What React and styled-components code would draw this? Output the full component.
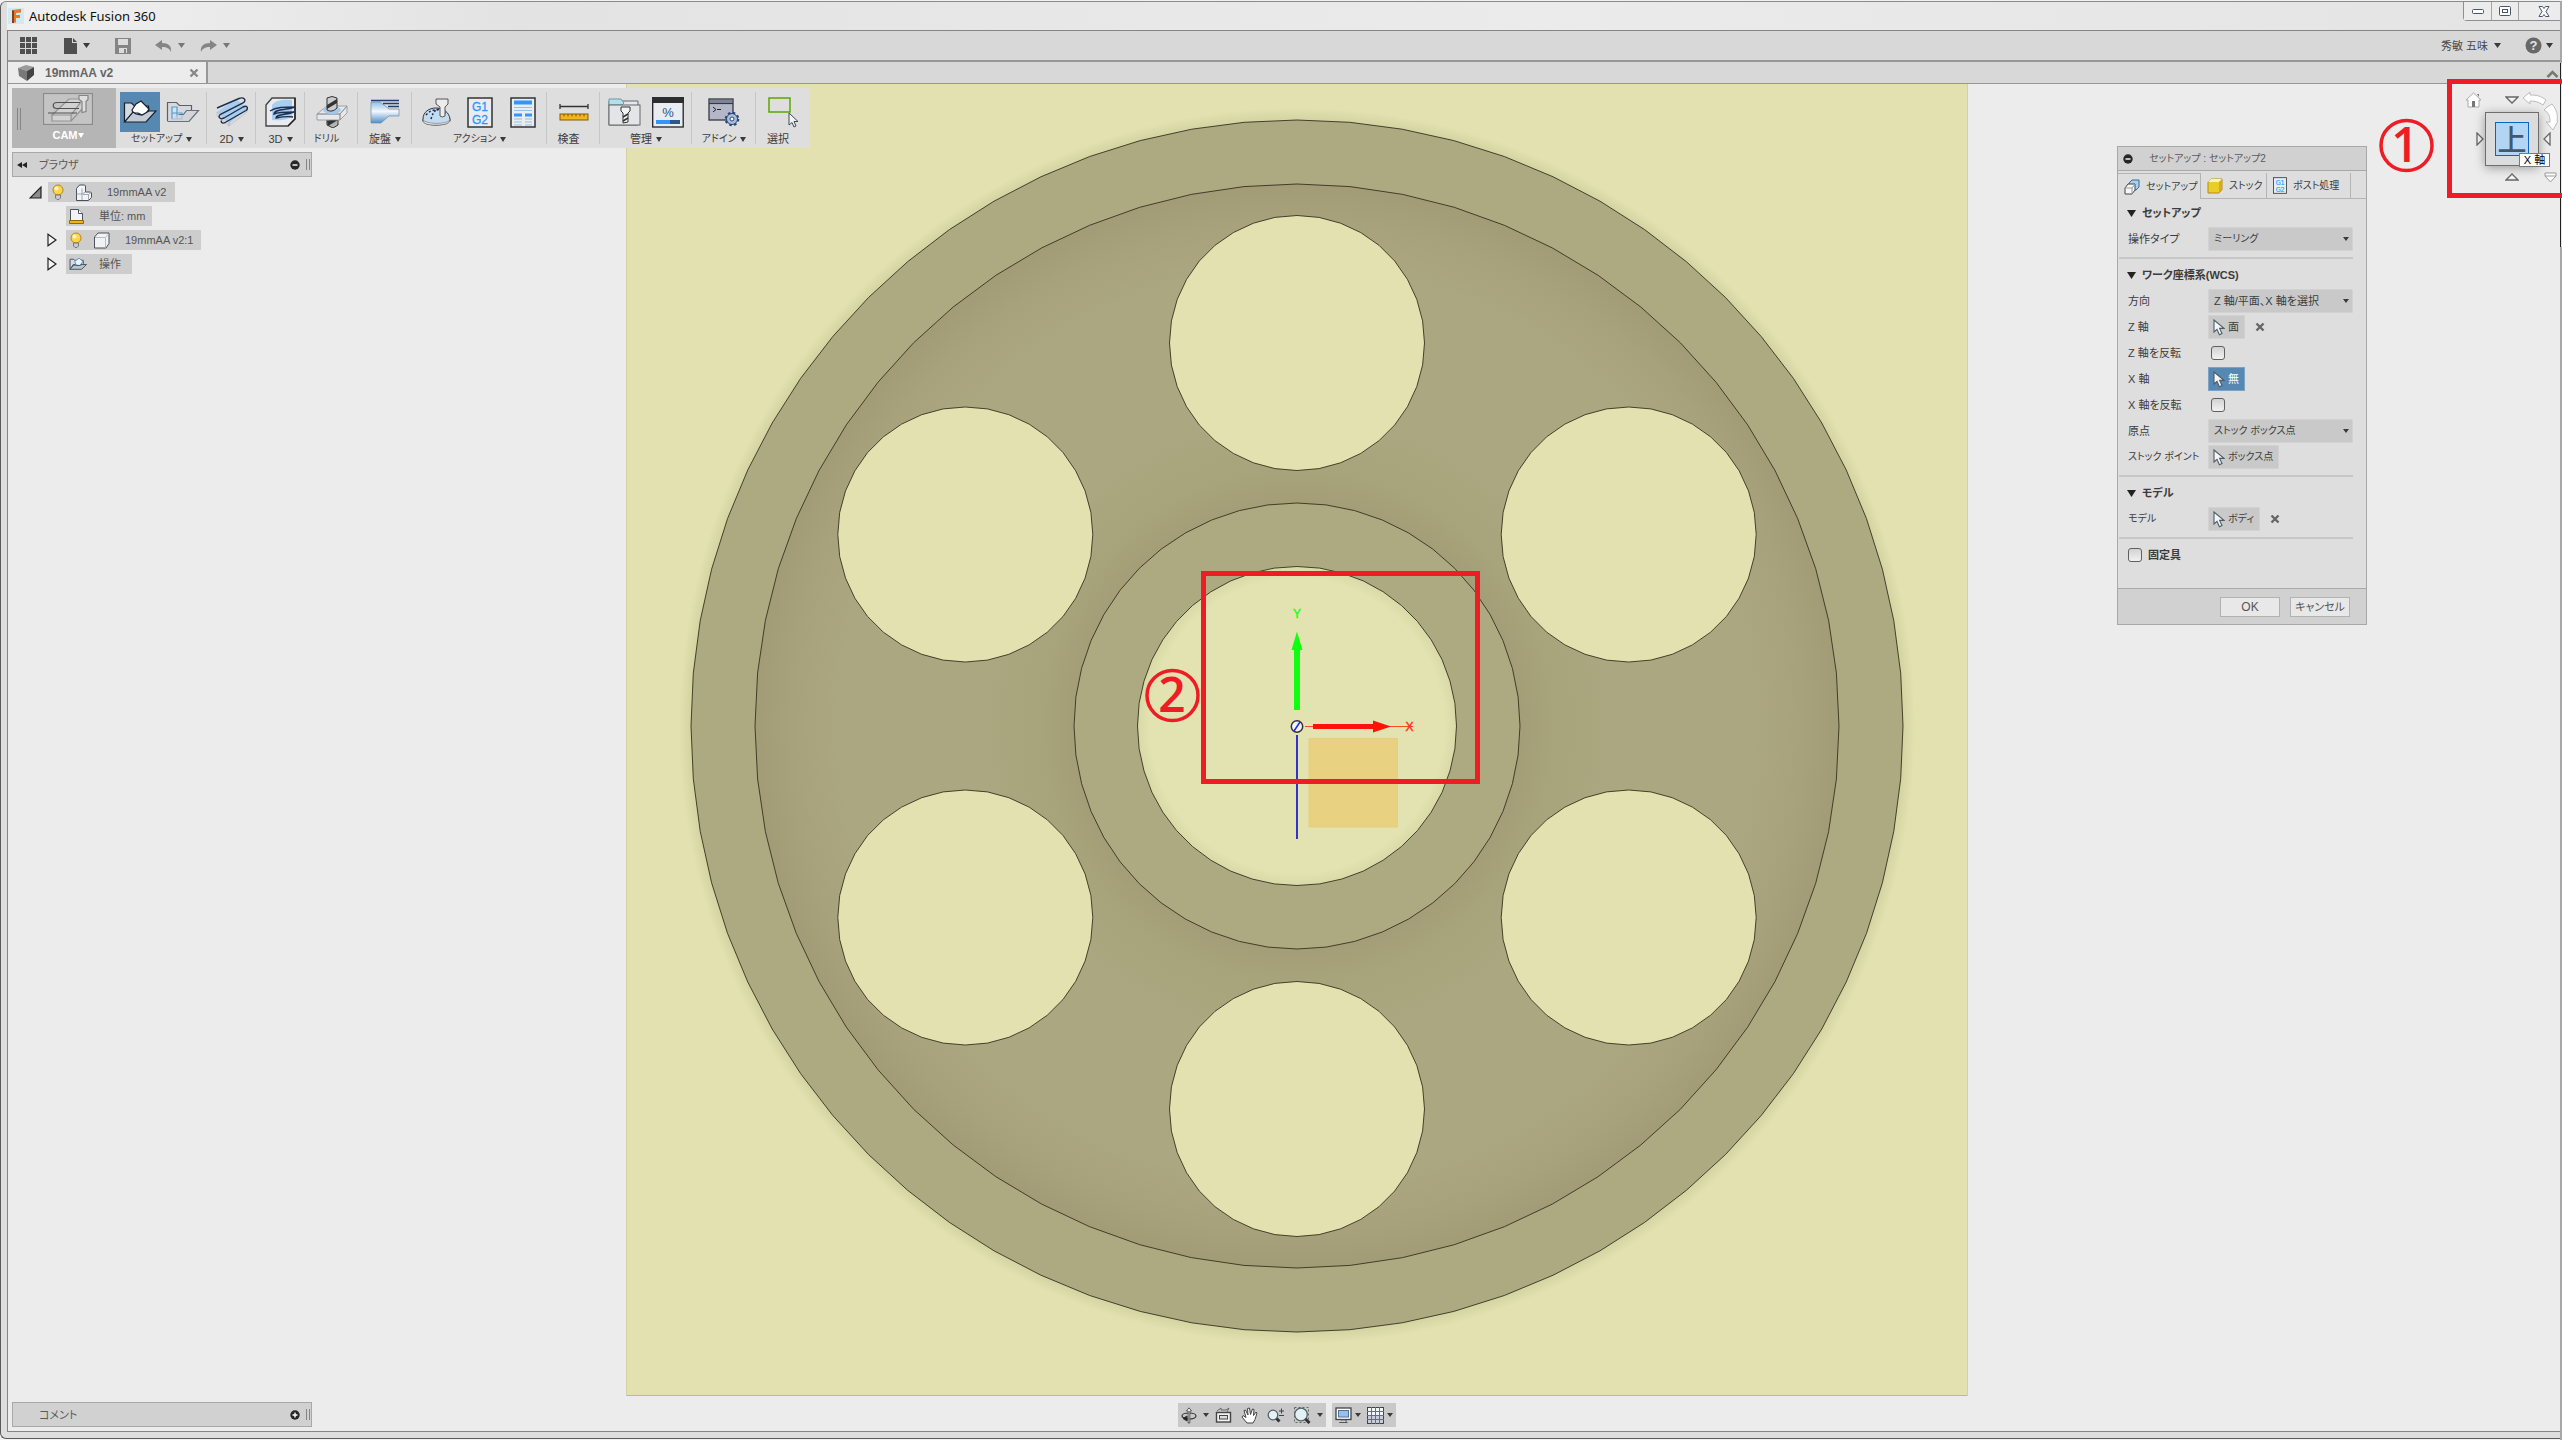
import React from 'react';
import styled, { createGlobalStyle } from 'styled-components';

const GlobalStyle = createGlobalStyle`
  * { box-sizing: border-box; }
  html, body, #root { height: 100%; }
  body {
    margin: 0;
    background: #f2f2f2;
    color: #3c3c3c;
    font: 11px/14px "Liberation Sans", "Noto Sans CJK JP", sans-serif;
    font-feature-settings: "palt";
    overflow: hidden;
  }
  button, select, input { font: inherit; color: inherit; font-feature-settings: inherit; }
  svg { display: block; flex: none; }
`;

// Katakana captions are set one size below kanji and Latin ones.
const size = (text) => (/^[\u30a0-\u30ff\s]+点?$/.test(text) ? 10 : 11);

/* ---------- window frame ---------- */

const Window = styled.div`
  position: relative;
  display: flex;
  height: 100vh;
  padding-top: 1px;
`;
const Frame = styled.div`
  flex: 1;
  min-width: 0;
  display: flex;
  flex-direction: column;
  margin-bottom: 1px;
  padding: 0 0 6px 6px;
  border: 1px solid #5c5a5b;
  border-right: 0;
  border-top-color: #8a8a8a;
  border-radius: 6px 0 0 6px;
  background: #dfdede;
`;
const EdgeStrip = styled.div`
  width: 2px;
  background:
    linear-gradient(#222, #222) 0 62px / 1px 184px no-repeat,
    linear-gradient(#e6e6e6, #e6e6e6) 1px 62px / 1px 184px no-repeat,
    #a8a8a8;
`;
const TitleBar = styled.header`
  display: flex;
  align-items: flex-start;
  height: 28px;
  padding-left: 1px;
  background: linear-gradient(90deg, #f0f0f0, #e3e3e3 20%, #ebebeb 60%, #e4e4e4);
  color: #111;
`;
const Title = styled.h1`
  flex: 1;
  margin: 5px 0 0 5px;
  font: 13px/18px "Noto Sans", sans-serif;
`;
const LogoSlot = styled.div`
  padding-top: 6px;
`;
const WindowButtons = styled.div`
  display: flex;
  border: 1px solid #8f8f8f;
  border-top: 0;
  border-right: 0;
  border-radius: 0 0 0 4px;
`;
const WindowButton = styled.button`
  display: flex;
  align-items: center;
  justify-content: center;
  width: ${(p) => p.$width}px;
  height: 18px;
  padding: 0 0 0 ${(p) => p.$inset || 0}px;
  border: 0;
  border-left: ${(p) => (p.$first ? 0 : 1)}px solid #a5a5a5;
  background: #ececec;
`;
const Client = styled.div`
  flex: 1;
  min-height: 0;
  display: flex;
  flex-direction: column;
  border: 1px solid #858585;
  border-right: 0;
  background: #ececec;
`;

/* ---------- top bars ---------- */

const AppBar = styled.nav`
  display: flex;
  align-items: center;
  height: 31px;
  padding: 0 7px 0 12px;
  border-bottom: 2px solid #979797;
  background: #d8d8d8;
`;
const IconButton = styled.button`
  display: flex;
  align-items: center;
  justify-content: flex-start;
  gap: ${(p) => p.$gap || 6}px;
  width: ${(p) => (p.$width ? p.$width + 'px' : 'auto')};
  height: 24px;
  padding: 0;
  border: 0;
  background: none;
  color: ${(p) => (p.$muted ? '#8a8a8a' : '#484848')};
`;
const Grow = styled.div`
  flex: 1;
`;
const UserButton = styled(IconButton)`
  margin-right: 24px;
`;
const TabStrip = styled.div`
  display: flex;
  height: 22px;
  border-bottom: 1px solid #979797;
  background: #d8d8d8;
`;
const DocumentTab = styled.div`
  display: flex;
  align-items: center;
  width: 200px;
  padding: 0 7px 0 10px;
  border-right: 2px solid #979797;
  background: #ececec;
  color: #666;
  font-size: 12px;
  font-weight: bold;
`;
const TabName = styled.span`
  flex: 1;
  margin-left: 10px;
`;

/* ---------- viewport ---------- */

const Viewport = styled.main`
  flex: 1;
  min-height: 0;
  display: grid;
  grid-template: minmax(0, 1fr) / minmax(0, 1fr);
  > * { grid-area: 1 / 1; }
`;
const Canvas = styled.svg`
  width: 100%;
  height: 100%;
`;
const LeftColumn = styled.div`
  z-index: 1;
  justify-self: start;
  display: flex;
  flex-direction: column;
  align-items: flex-start;
  padding: 4px;
`;
const Ribbon = styled.div`
  display: flex;
  height: 60px;
  margin-bottom: 4px;
  background: #dedede;
`;
const Workspace = styled.button`
  display: grid;
  grid-template-columns: 4px 1fr;
  grid-template-rows: 32px 1fr;
  place-items: center;
  width: 104px;
  padding: 5px 1px 3px 5px;
  border: 0;
  background: #b5b5b5;
  color: #fff;
  font-weight: bold;
  > :first-child { grid-row: 1 / 3; }
`;
const Grip = styled.span`
  display: block;
  width: 4px;
  height: ${(p) => p.$height}px;
  border: solid #858585;
  border-width: 0 1px;
`;
const Group = styled.div`
  display: flex;
  flex-direction: column;
  align-items: center;
  width: ${(p) => p.$width}px;
  padding-top: 4px;
  background: linear-gradient(#c6c6c6, #c6c6c6) right center / 1px 52px no-repeat;
  &:last-child { background: none; }
`;
const ToolRow = styled.div`
  display: flex;
  gap: 3px;
`;
const Tool = styled.button`
  display: flex;
  align-items: center;
  justify-content: center;
  width: 40px;
  height: 40px;
  padding: 0;
  border: 0;
  background: ${(p) => (p.$active ? '#5788b2' : 'none')};
`;
const Caption = styled.div`
  display: flex;
  align-items: center;
  justify-content: center;
  gap: ${(p) => p.$gap ?? 4}px;
  font-size: ${(p) => p.$size || 11}px;
  white-space: nowrap;
`;

const PanelBar = styled.div`
  display: flex;
  align-items: center;
  width: 300px;
  height: 25px;
  padding: 0 1px 0 4px;
  border: 1px solid #a8a8a8;
  background: #d1d1d1;
`;
const PanelTitle = styled.h2`
  flex: 1;
  margin: 0 0 0 ${(p) => p.$indent}px;
  color: #5a5a5a;
  font: inherit;
`;
const BareButton = styled.button`
  display: flex;
  justify-self: ${(p) => p.$side || 'auto'};
  padding: 0;
  border: 0;
  background: none;
`;
const GripSlot = styled.span`
  margin-left: 6px;
`;
const Tree = styled.ul`
  flex: 1;
  margin: 5px 0 0;
  padding: 0;
  list-style: none;
`;
const TreeRow = styled.li`
  display: flex;
  align-items: center;
  height: 20px;
  margin-bottom: 4px;
  padding-left: ${(p) => p.$indent}px;
`;
const ArrowSlot = styled.span`
  width: 19px;
`;
const TreeItem = styled.span`
  display: flex;
  align-items: center;
  gap: 10px;
  width: ${(p) => p.$width}px;
  height: 20px;
  padding-left: 3px;
  background: #cdcdcd;
  color: #555;
`;
const TreeText = styled.span`
  margin-left: ${(p) => p.$space}px;
`;

const NavBars = styled.div`
  z-index: 1;
  align-self: end;
  justify-self: center;
  display: flex;
  gap: 6px;
  padding: 0 0 4px 6px;
`;
const NavBar = styled.div`
  display: flex;
  align-items: center;
  gap: 6px;
  height: 24px;
  padding: 0 3px;
  background: #c9c9c9;
`;

/* ---------- view cube ---------- */

const CubeGrid = styled.div`
  z-index: 1;
  position: relative;
  align-self: start;
  justify-self: end;
  display: grid;
  grid-template: 22px 54px 20px / 22px 54px 20px;
  gap: 1px;
  place-items: center;
  padding-top: 5px;
`;
const RollArrows = styled.svg`
  margin: 12px 12px -12px -8px;
`;
const CubeFace = styled.button`
  display: grid;
  place-items: center;
  width: 54px;
  height: 54px;
  padding: 0;
  border: 1px solid #6e6e6e;
  background: #dcdcdc;
  box-shadow: 0 2px 10px rgba(0, 0, 0, 0.35);
`;
const CubeLabel = styled.span`
  width: 34px;
  height: 34px;
  border: 1px solid #0a64c4;
  background: #b1d5f3;
  color: #43586e;
  font: 500 29px/30px "Noto Sans CJK JP", sans-serif;
`;
const Tip = styled.span`
  position: absolute;
  left: 57px;
  top: 69px;
  width: 31px;
  border: 1px solid #767a86;
  background: #fff;
  color: #000;
  line-height: 12px;
  text-align: center;
  white-space: nowrap;
`;

/* ---------- set-up dialog ---------- */

const Dialog = styled.form`
  z-index: 1;
  align-self: start;
  justify-self: end;
  width: 250px;
  margin: 62px 193px 0 0;
  border: 1px solid #a8a8a8;
  background: #dedede;
`;
const DialogHead = styled.div`
  display: flex;
  align-items: center;
  gap: 16px;
  height: 24px;
  padding-left: 5px;
  border-bottom: 1px solid #a8a8a8;
  background: #d1d1d1;
  color: #5a5a5a;
  font-size: 10px;
`;
const Tabs = styled.div`
  display: flex;
  height: 28px;
  padding-top: 2px;
  background: linear-gradient(#b4b4b4, #b4b4b4) bottom / 100% 1px no-repeat;
`;
const Tab = styled.button`
  display: flex;
  align-items: center;
  gap: 6px;
  width: ${(p) => p.$width}px;
  padding: 0 0 0 6px;
  border: solid #b4b4b4;
  border-width: ${(p) => (p.$active ? '1px 1px 0 0' : '0 1px 1px 0')};
  background: #dedede;
  font-size: 10px;
  white-space: nowrap;
`;
const Body = styled.div`
  padding: 1px 13px 20px 1px;
`;
const SectionHead = styled.button`
  display: flex;
  align-items: center;
  gap: 6px;
  height: 26px;
  padding: 0 0 0 8px;
  border: 0;
  background: none;
  font-weight: bold;
`;
const Rule = styled.hr`
  height: 2px;
  margin: 5px 0 3px;
  border: 0;
  background: #c7c7c7;
`;
const Field = styled.div`
  display: grid;
  grid-template-columns: 80px 1fr;
  align-items: center;
  height: 26px;
  padding-left: 9px;
`;
const Label = styled.label`
  font-size: ${(p) => p.$size}px;
  white-space: nowrap;
`;
const Controls = styled.div`
  display: flex;
  align-items: center;
  gap: 10px;
`;
const SelectBox = styled.div`
  display: grid;
  align-items: center;
  > * { grid-area: 1 / 1; }
  svg { justify-self: end; margin-right: 4px; pointer-events: none; }
`;
const Select = styled.select`
  width: 100%;
  height: 24px;
  padding: 0 0 0 5px;
  border: 1px solid #d2d2d2;
  border-radius: 1px;
  background: #c9c9c9;
  font-size: ${(p) => p.$size}px;
  appearance: none;
`;
const Pick = styled.button`
  display: flex;
  align-items: center;
  gap: 3px;
  min-width: 37px;
  height: 24px;
  padding: 0 5px 0 4px;
  border: 1px solid ${(p) => (p.$active ? '#7aa3c6' : '#d2d2d2')};
  background: ${(p) => (p.$active ? '#5788b2' : '#c9c9c9')};
  color: ${(p) => (p.$active ? '#fff' : 'inherit')};
  font-size: ${(p) => p.$size}px;
`;
const Check = styled.input`
  width: 14px;
  height: 14px;
  margin: 0 0 0 ${(p) => p.$indent || 0}px;
  border: 1px solid #606060;
  border-radius: 3px;
  background: linear-gradient(#d2d2d2, #f2f2f2);
  appearance: none;
`;
const CheckLine = styled.label`
  display: flex;
  align-items: center;
  gap: 6px;
  height: 26px;
  padding-left: 9px;
  font-weight: bold;
`;
const DialogFoot = styled.div`
  display: flex;
  align-items: center;
  justify-content: flex-end;
  gap: 10px;
  height: 36px;
  padding-right: 16px;
  border-top: 1px solid #a8a8a8;
  background: #d1d1d1;
`;
const FootButton = styled.button`
  width: 60px;
  height: 20px;
  padding: 0;
  border: 1px solid #b2b2b2;
  background: #e8e8e8;
  color: #555;
  font-size: ${(p) => p.$size || 11}px;
  white-space: nowrap;
`;

const Notes = styled.svg`
  position: absolute;
  inset: 0;
  width: 100%;
  height: 100%;
  z-index: 2;
  pointer-events: none;
`;

/* ---------- icons ---------- */

const CaretShape = styled.svg`
  visibility: ${(p) => (p.$hidden ? 'hidden' : 'visible')};
`;
const Caret = ({ w = 7, h = 5, color = '#3a3a3a', hidden }) => (
  <CaretShape width={w} height={h} $hidden={hidden}><path d={`M0 0H${w}L${w / 2} ${h}Z`} fill={color} /></CaretShape>
);
const Cross = ({ color = '#666' }) => (
  <svg width="10" height="10"><path d="M1.5 1.5l7 7M8.5 1.5l-7 7" stroke={color} strokeWidth="2.4" /></svg>
);
const Dot = ({ plus }) => (
  <svg width="10" height="10">
    <circle cx="5" cy="5" r="4.7" fill="#262626" />
    <path d={plus ? 'M2.5 5h5M5 2.5v5' : 'M2.5 5h5'} stroke="#fff" strokeWidth="1.4" />
  </svg>
);
const Pointer = ({ w = 12, h = 17 }) => (
  <svg width={w} height={h} viewBox="0 0 12 17">
    <path d="M1 1v12l3-2.6 2.4 5.4 2.6-1.2-2.4-5.2H11z" fill="#f4f6f8" stroke="#4d5a68" strokeWidth="1.1" />
  </svg>
);
const Bulb = () => (
  <svg width="14" height="16" viewBox="0 0 14 16">
    <circle cx="7" cy="6" r="5" fill="#fbd64a" stroke="#b98516" />
    <circle cx="5.5" cy="4.5" r="2" fill="#fff6cf" />
    <path d="M4.5 11h5v3l-1.5 1.5h-2L4.5 14z" fill="#c8ccd2" stroke="#666" strokeWidth=".8" />
  </svg>
);
const Components = () => (
  <svg width="18" height="17" viewBox="0 0 18 17" stroke="#4b5158" strokeLinejoin="round">
    <path d="M1.500 4.500l3-3.500h5l1 1v6h5l1 1v4.500l-3 3H1.500z" fill="#f2f4f8" />
    <path d="M1.500 10h5.500v6M7 10l3.500-2M8 10.500h5.500V16M13.500 10.500L16 8.500M7 10V4.500" fill="none" stroke="#8d949e" strokeWidth=".8" />
  </svg>
);
const Body3D = () => (
  <svg width="18" height="17" viewBox="0 0 18 17" stroke="#4b5158">
    <path d="M1.500 5l3.500-4h11v10.500l-3 4.500H1.500z" fill="#f2f2f4" />
    <path d="M2 5.500H12.500v10M12.500 5.500L15.500 2" fill="none" stroke="#b8bcc4" />
  </svg>
);
const Units = () => (
  <svg width="16" height="17" viewBox="0 0 16 17">
    <path d="M1.500 13V1.500h8l4 4V13" fill="#f1f3f7" stroke="#4b5158" />
    <path d="M9.500 1.500v4h4" fill="#fff" stroke="#4b5158" />
    <path d="M.5 12.500h14v3H.5z" fill="#edb51d" stroke="#9a6508" />
  </svg>
);
const SetupSmall = () => (
  <svg width="18" height="14" viewBox="0 0 34 24" stroke="#44525f" strokeWidth="1.800">
    <path d="M2 3h6l3 2h16v8H8L2 22z" fill="#d7dbe2" />
    <path d="M11 7l8-6 7 6-5 8-8-1z" fill="#e9f4ff" stroke="#5b92bf" />
    <path d="M2 22L9 14l10 1 6-2h8l-9 9z" fill="#b8c4d2" />
  </svg>
);
const Disclosure = ({ open }) =>
  open ? (
    <svg width="13" height="13"><path d="M12 1v11H1z" fill="#8c8c8c" stroke="#222" strokeWidth="1.200" /></svg>
  ) : (
    <svg width="10" height="14"><path d="M1 1.200l8 5.800-8 5.800z" fill="#f6f6f6" stroke="#222" strokeWidth="1.200" /></svg>
  );

const CamIcon = () => (
  <svg width="50" height="32" viewBox="0 0 50 32" fill="none" stroke="#6b6b6b" strokeWidth="1.200">
    <rect x=".5" y=".5" width="49" height="31" fill="#c4c4c4" stroke="#8a8a8a" />
    <path d="M9 22l17-16h14L28 22zM9 22v6h19v-6M28 28l12-13V8" fill="#d2d2d2" stroke="#939393" />
    <path d="M37 9.500H14c-5 0-5 6 0 6h22M5 20h29" stroke="#505050" />
    <path d="M36 2.500h9v4l-2 2v10l-4 1V8.500l-3-2z" fill="#dedede" stroke="#858585" />
  </svg>
);
const SetupIcon = () => (
  <svg width="34" height="24" viewBox="0 0 34 24" strokeWidth="1.200">
    <path d="M1.500 22V3h7l3 3h14v7" fill="#d5d9e0" stroke="#16202a" />
    <path d="M9 10l4-6 5-3 8 8-5 7-6-3-5 0z" fill="#fff" stroke="#16202a" />
    <path d="M1.500 22L10 12l3 2 6 1 7-4h7L23 22z" fill="#c3cbd6" stroke="#16202a" />
  </svg>
);
const FolderIcon = () => (
  <svg width="34" height="22" viewBox="0 0 34 22" strokeWidth="1.200">
    <path d="M1.500 20V1.500h9l3 3h12v5" fill="#d6d9dd" stroke="#5b6065" />
    <path d="M6 6v12h10v-6h-5V6zM6 12h5v6" fill="#cce6f8" stroke="#549ccf" />
    <path d="M1.500 20.500H23l9.500-11h-12l-3 4h-5" fill="#cdd1d7" fillOpacity=".7" stroke="#6b7076" />
  </svg>
);
const Mill2D = () => (
  <svg width="32" height="30" viewBox="0 0 32 30">
    <path d="M1 15L20 2l11 9-18 15z" fill="#a9cdec" />
    <path d="M1 15l12 11v3L1 19zM13 26l18-15v4L13 29z" fill="#d5dbe2" stroke="#a9b1ba" strokeWidth=".5" />
    <path d="M1 11L23 1.500c5-2 8 2 4 4.500L5 17c-4 2.500-1 6 3 4L27 10c4-2 6 1 3 3.500L10 25c-3 2-5.500 1-4.500-1.500" fill="none" stroke="#1f2f52" strokeWidth="1.400" />
  </svg>
);
const Mill3D = () => (
  <svg width="32" height="30" viewBox="0 0 32 30">
    <path d="M1 8l6-7h23v21l-7 7H1z" fill="#e9ebee" stroke="#444" strokeWidth="1.400" />
    <path d="M7 8c3-5 12-6 20-5v16c-4 4-12 5-20 4z" fill="#a9cff0" />
    <path d="M30 1v21l-7 7" fill="none" stroke="#222" strokeWidth="1.400" />
    <path d="M5 14c6-4 14-4 25-4M30 10c-8 3-21 2-21 7 4-2 12-2 20-2-7 3-18 2-18 6 5-1 11-2 17-1" fill="none" stroke="#1f2f52" strokeWidth="1.400" />
  </svg>
);
const DrillIcon = () => (
  <svg width="32" height="32" viewBox="0 0 32 32">
    <path d="M11 21h11v8l-5 3-6-3z" fill="#b4b4b4" stroke="#333" />
    <path d="M11 25l11-4v3L12 30z" fill="#333" />
    <path d="M1 18l10-8h20l-7 8zM1 18h23v6H1zM24 24l7-7v-7l-7 8z" fill="#e6e8eb" stroke="#8b8f94" strokeWidth=".8" />
    <ellipse cx="16" cy="14" rx="9" ry="4" fill="#a5c9ea" />
    <path d="M11 2q5-3 10 0v10q-5 5-10 2z" fill="#ccc" stroke="#333" />
    <path d="M11 9L21 3v4L11 13z" fill="#333" />
  </svg>
);
const TurnIcon = () => (
  <svg width="30" height="26" viewBox="0 0 30 26">
    <defs>
      <linearGradient id="turn" x1="0" y1="0" x2="0" y2="1">
        <stop offset="0" stopColor="#8fbfe6" /><stop offset=".45" stopColor="#f2f8fd" /><stop offset="1" stopColor="#4f8fca" />
      </linearGradient>
    </defs>
    <path d="M1 3h9l9 7h10v7H19l-8 7H1z" fill="url(#turn)" stroke="#6f8ca8" strokeWidth=".7" />
    <path d="M1 1.500h28M13 4.500h16M18 7.500h11" stroke="#1f3f70" strokeWidth="1.300" />
  </svg>
);
const SimulateIcon = () => (
  <svg width="30" height="30" viewBox="0 0 30 30">
    <path d="M1 22c0-7 6-11 13-11s13 4 14 11c1 3-3 6-14 6S0 25 1 22z" fill="#c4dcf2" stroke="#333" />
    <path d="M1 23c3 4 23 5 27 0 0 3-4 5-14 5S1 26 1 23z" fill="#f0f0f0" stroke="#666" strokeWidth=".6" />
    <path d="M4 18c6-7 15-7 21 0M9 22c2-7 4-9 8-10" fill="none" stroke="#1f2f52" strokeWidth="1.500" strokeDasharray="2 2" />
    <path d="M14 2h12v5l-3 3v9q-3 2-5 0v-9l-4-3z" fill="#ececec" stroke="#555" />
  </svg>
);
const CodeIcon = ({ w = 26, h = 31 }) => (
  <svg width={w} height={h} viewBox="0 0 26 31">
    <rect x="1" y="1" width="24" height="29" fill="#e9ecf0" stroke="#333" strokeWidth="1.500" />
    <text x="13" y="14" textAnchor="middle" fontSize="12" fill="#2f96ff" stroke="#2f96ff" strokeWidth=".3">G1</text>
    <text x="13" y="27" textAnchor="middle" fontSize="12" fill="#2f96ff" stroke="#2f96ff" strokeWidth=".3">G2</text>
  </svg>
);
const SheetIcon = () => (
  <svg width="26" height="31" viewBox="0 0 26 31">
    <rect x="1" y="1" width="24" height="29" fill="#e9ecf0" stroke="#333" strokeWidth="1.500" />
    <path d="M4 3.500h18v4H4zM4 16.500h8v3H4zM15 16.500h7v3h-7z" fill="#2f96ff" />
    <path d="M4 10.500h18M4 13.500h18M4 22h8M4 25h8M4 28h8M15 22h7M15 25h7M15 28h7" stroke="#93c3e0" />
  </svg>
);
const MeasureIcon = () => (
  <svg width="30" height="18" viewBox="0 0 30 18">
    <path d="M1 3.500h28M1 1v5M29 1v5" stroke="#333" strokeWidth="1.300" />
    <rect x="1" y="11" width="28" height="6" fill="#f0b81c" stroke="#8a5604" />
    <path d="M5 11v2.500M9 11v2.500M13 11v2.500M17 11v2.500M21 11v2.500M25 11v2.500" stroke="#8a5604" />
  </svg>
);
const LibraryIcon = () => (
  <svg width="33" height="28" viewBox="0 0 33 28">
    <path d="M1 27V3h29v24z" fill="#e5e7ea" stroke="#666" />
    <path d="M1 7V1h12l3 4-2 2z" fill="#b5dfec" stroke="#6a98a8" />
    <rect x="1" y="7" width="31" height="20" fill="#e3e5e8" stroke="#666" />
    <path d="M13 9h9v4l-2 2v9l-5 1V15l-2-2z" fill="#f4f4f4" stroke="#333" />
    <path d="M15 19l5-3M15 23l5-3" stroke="#333" strokeWidth="1.500" />
  </svg>
);
const TaskIcon = () => (
  <svg width="32" height="31" viewBox="0 0 32 31">
    <rect x=".7" y="1" width="30.500" height="29" fill="#e9ecf0" stroke="#222" strokeWidth="1.300" />
    <path d="M0 0h32v6H0z" fill="#2c2d2f" />
    <text x="16" y="20" textAnchor="middle" fontSize="13" fill="#2d5580">%</text>
    <path d="M4 23h14v4H4z" fill="#2f96ff" /><path d="M18 23h10v4H18z" fill="#2a5888" />
  </svg>
);
const AddinIcon = () => (
  <svg width="32" height="30" viewBox="0 0 32 30">
    <rect x="1" y="2" width="24" height="21" fill="#b3b7c7" stroke="#333842" strokeWidth="1.300" />
    <path d="M1 6.500h24" stroke="#333842" strokeWidth="1.200" /><path d="M2 3h22v3H2z" fill="#7e8498" />
    <path d="M5 10l3 2.500L5 15M9 12.500h4" fill="none" stroke="#222" />
    <circle cx="24" cy="22" r="5.500" fill="#a9bfdf" stroke="#2b4675" />
    <circle cx="24" cy="22" r="6.300" fill="none" stroke="#2b4675" strokeWidth="2" strokeDasharray="2.500 2.450" />
    <circle cx="24" cy="22" r="2" fill="#fff" stroke="#2b4675" />
  </svg>
);
const SelectIcon = () => (
  <svg width="31" height="32" viewBox="0 0 31 32">
    <rect x="1" y="2" width="21" height="14" fill="none" stroke="#5ba600" strokeWidth="1.500" />
    <path d="M21 17v12l3-2.500 2 4.500 2-1-2-4.500h4z" fill="#f1f3f5" stroke="#404a55" />
  </svg>
);

/* ---------- model drawing ---------- */

const CX = 1297;
const CY = 726;
const ring = (x, y, r, n) =>
  'M' +
  Array.from({ length: n }, (_, i) => {
    const a = (i * 2 * Math.PI) / n;
    return `${(x + r * Math.cos(a)).toFixed(1)} ${(y + r * Math.sin(a)).toFixed(1)}`;
  }).join('L') +
  'Z';
const holes = [30, 90, 150, 210, 270, 330].map((deg) => {
  const a = (deg * Math.PI) / 180;
  return ring(CX + 383 * Math.cos(a), CY + 383 * Math.sin(a), 127.5, 36);
});

const Model = () => (
  <Canvas viewBox="8 84 2552 1347" aria-label="model">
    <defs>
      <radialGradient id="web" gradientUnits="userSpaceOnUse" cx={CX} cy={CY} r="543">
        <stop offset=".41" stopColor="#a39e77" />
        <stop offset=".47" stopColor="#a7a37b" />
        <stop offset=".58" stopColor="#aba780" />
        <stop offset=".84" stopColor="#aba780" />
        <stop offset=".93" stopColor="#a7a27b" />
        <stop offset="1" stopColor="#a19c75" />
      </radialGradient>
      <radialGradient id="halo" gradientUnits="userSpaceOnUse" cx={CX} cy={CY} r="618">
        <stop offset=".978" stopColor="#d2d1a0" />
        <stop offset="1" stopColor="#e2e1af" />
      </radialGradient>
      <radialGradient id="bore" gradientUnits="userSpaceOnUse" cx={CX} cy={CY} r="160">
        <stop offset=".92" stopColor="#e3e2b1" />
        <stop offset="1" stopColor="#d9d8a7" />
      </radialGradient>
    </defs>
    <rect x="626" y="80" width="1342" height="1316" fill="#e2e1af" />
    <path d="M626 1395.500H1968" stroke="#bdbb88" fill="none" />
    <path d="M626.500 84V1396M1967.500 84V1396" stroke="#d3d2a4" fill="none" />
    <circle cx={CX} cy={CY} r="618" fill="url(#halo)" />
    <g stroke="#35321f" strokeWidth=".9">
      <path d={ring(CX, CY, 606, 72)} fill="#ada981" />
      <path d={ring(CX, CY, 542, 64)} fill="url(#web)" />
      {holes.map((d, i) => <path key={i} d={d} fill="#e2e1af" />)}
      <path d={ring(CX, CY, 223, 48)} fill="#ada981" />
      <path d={ring(CX, CY, 159.5, 44)} fill="url(#bore)" />
    </g>
    <rect x="1309" y="738.500" width="88.500" height="88.500" fill="#e8d181" stroke="#e9cd7a" />
    <path d="M1297 735v104" stroke="#3333cc" strokeWidth="2" />
    <path d="M1294 710v-60h-2.500l5.500-18.500 5.500 18.500H1300v60z" fill="#10ff10" />
    <path d="M1305 726.500h108" stroke="#ff4a20" />
    <path d="M1313 724h60v-3.500l18 6-18 6V729h-60z" fill="#ff1208" />
    <circle cx="1297" cy="726.500" r="5.700" fill="#f4f4ff" stroke="#333" strokeWidth="1.500" />
    <path d="M1294 731l6-9" stroke="#2424ee" strokeWidth="1.500" />
    <text x="1297" y="618" textAnchor="middle" fontSize="12" fill="#10ff10" stroke="#10ff10" strokeWidth=".4">Y</text>
    <text x="1409.500" y="730.500" textAnchor="middle" fontSize="12" fill="#ff3020" stroke="#ff3020" strokeWidth=".4">X</text>
  </Canvas>
);

/* ---------- data ---------- */

const ribbon = [
  { name: 'セットアップ', menu: true, width: 91, active: 0, icons: [SetupIcon, FolderIcon] },
  { name: '2D', menu: true, width: 49, icons: [Mill2D] },
  { name: '3D', menu: true, width: 49, icons: [Mill3D] },
  { name: 'ドリル', width: 53, icons: [DrillIcon] },
  { name: '旋盤', menu: true, width: 54, icons: [TurnIcon] },
  { name: 'アクション', menu: true, width: 135, icons: [SimulateIcon, CodeIcon, SheetIcon] },
  { name: '検査', width: 53, icons: [MeasureIcon] },
  { name: '管理', menu: true, width: 92, icons: [LibraryIcon, TaskIcon] },
  { name: 'アドイン', menu: true, width: 64, icons: [AddinIcon] },
  { name: '選択', width: 54, icons: [SelectIcon] },
];

const SelectField = ({ id, label, value }) => (
  <Field>
    <Label htmlFor={id} $size={size(label)}>{label}</Label>
    <SelectBox>
      <Select id={id} defaultValue={value} $size={size(value)}><option>{value}</option></Select>
      <Caret w={6} h={4} />
    </SelectBox>
  </Field>
);
const PickField = ({ id, label, value, active, clear }) => (
  <Field>
    <Label htmlFor={id} $size={size(label)}>{label}</Label>
    <Controls>
      <Pick id={id} type="button" $active={active} $size={size(value)}><Pointer />{value}</Pick>
      {clear && <BareButton type="button" aria-label="clear"><Cross /></BareButton>}
    </Controls>
  </Field>
);
const CheckField = ({ id, label }) => (
  <Field>
    <Label htmlFor={id} $size={size(label)}>{label}</Label>
    <Controls><Check id={id} type="checkbox" $indent={3} /></Controls>
  </Field>
);
const Section = ({ children }) => (
  <SectionHead type="button"><Caret w={9} h={7} color="#222" />{children}</SectionHead>
);

const SetupDialog = () => (
  <Dialog onSubmit={(e) => e.preventDefault()}>
    <DialogHead><Dot />セットアップ : セットアップ2</DialogHead>
    <Tabs role="tablist">
      <Tab type="button" role="tab" $width={83} $active>
        <svg width="16" height="16" viewBox="0 0 16 16">
          <path d="M5 4l3-3h7v7l-3 3H5z" fill="#a9d0ee" stroke="#2f6d9e" />
          <path d="M1 9l3-4h7v6l-3 4H1z" fill="#f7f7f7" stroke="#444" /><path d="M1 9h7v6M8 9l3-4" fill="none" stroke="#999" />
        </svg>
        セットアップ
      </Tab>
      <Tab type="button" role="tab" $width={66}>
        <svg width="16" height="16" viewBox="0 0 16 16">
          <path d="M1 4l3-3h11v11l-3 3H1z" fill="#e9ce28" stroke="#b88a16" /><path d="M1 4l3-3h11l-3 3z" fill="#fbf3bd" /><path d="M12 4l3-3v11l-3 3z" fill="#d9a91e" />
        </svg>
        ストック
      </Tab>
      <Tab type="button" role="tab" $width={84}><CodeIcon w={14} h={17} />ポスト処理</Tab>
    </Tabs>
    <Body>
      <Section>セットアップ</Section>
      <SelectField id="operation" label="操作タイプ" value="ミーリング" />
      <Rule />
      <Section>ワーク座標系(WCS)</Section>
      <SelectField id="orientation" label="方向" value="Z 軸/平面、X 軸を選択" />
      <PickField id="zaxis" label="Z 軸" value="面" clear />
      <CheckField id="flipz" label="Z 軸を反転" />
      <PickField id="xaxis" label="X 軸" value="無" active />
      <CheckField id="flipx" label="X 軸を反転" />
      <SelectField id="origin" label="原点" value="ストック ボックス点" />
      <PickField id="stockpoint" label="ストック ポイント" value="ボックス点" />
      <Rule />
      <Section>モデル</Section>
      <PickField id="model" label="モデル" value="ボディ" clear />
      <Rule />
      <CheckLine><Check type="checkbox" />固定具</CheckLine>
    </Body>
    <DialogFoot>
      <FootButton type="submit" $size={12}>OK</FootButton>
      <FootButton type="button">キャンセル</FootButton>
    </DialogFoot>
  </Dialog>
);

const Triangle = ({ d, w, h }) => (
  <svg width={w} height={h}><path d={d} fill="#f4f4f4" stroke="#666" strokeWidth="1.300" /></svg>
);

const ViewCube = () => (
  <CubeGrid>
    <BareButton aria-label="home">
      <svg width="17" height="16"><path d="M1 8l7.500-7L16 8h-2v7H3V8z" fill="#fff" stroke="#aaa" /><path d="M7 9h3v6H7zM12 2h2v3z" fill="#777" /></svg>
    </BareButton>
    <BareButton aria-label="up"><Triangle w={14} h={8} d="M1 1h12L7 7z" /></BareButton>
    <BareButton aria-label="roll">
      <RollArrows width="36" height="40" viewBox="0 0 36 40" fill="#fff" stroke="#bbb">
        <path d="M1 6l7-6v3c7 0 11 1 16 5l-3 5c-4-3-8-4-13-4v3z" />
        <path d="M25 15l5-3c5 6 6 11 5 17h1l-5 9-7-8h4c0-6-1-9-6-12z" />
      </RollArrows>
    </BareButton>
    <BareButton aria-label="left" $side="end"><Triangle w={8} h={14} d="M1 1v12L7 7z" /></BareButton>
    <CubeFace><CubeLabel>上</CubeLabel></CubeFace>
    <BareButton aria-label="right" $side="start"><Triangle w={12} h={14} d="M10 1v12L4 7z" /></BareButton>
    <span />
    <BareButton aria-label="down"><Triangle w={14} h={8} d="M1 7h12L7 1z" /></BareButton>
    <BareButton aria-label="cube menu">
      <svg width="13" height="11"><path d="M1 1h11v3L6.500 10 1 4zM1 4h11" fill="#fff" stroke="#999" /></svg>
    </BareButton>
    <Tip>X 軸</Tip>
  </CubeGrid>
);

const Navigation = () => (
  <NavBars>
    <NavBar>
      <IconButton aria-label="orbit">
        <svg width="16" height="17" fill="none" stroke="#333"><ellipse cx="8" cy="9" rx="7" ry="3" strokeWidth="1.200" /><path d="M7.200 16V4H5.500L8 .8 10.500 4H8.800v12z" fill="#fff" strokeWidth=".8" /><path d="M2 11.500l4-2.500v5z" fill="#222" /></svg>
        <Caret w={6} h={4} />
      </IconButton>
      <IconButton aria-label="look at" $width={20}>
        <svg width="17" height="16" fill="#f3f3f3" stroke="#444"><rect x="1.500" y="5.500" width="14" height="9.500" strokeWidth="1.400" /><rect x="4.500" y="8.500" width="8" height="3.500" fill="#ddd" /><path d="M2 4l4-3v2h5l3-2-2 4" fill="none" stroke="#666" /></svg>
      </IconButton>
      <IconButton aria-label="pan" $width={20}>
        <svg width="17" height="17"><path d="M6 16l-5-6 1-1.500 3 2L3 3.500l1.500-.5L7 8 6.500 1.500 8.500 1l1 6.500L11.500 2l1.500.5L12.500 8.500 15 5l1 1-2 6.500-2 3.500z" fill="#fff" stroke="#444" /></svg>
      </IconButton>
      <IconButton aria-label="zoom" $width={20}>
        <svg width="18" height="16"><circle cx="6" cy="8" r="4.800" fill="#e4f2f5" stroke="#56646a" strokeWidth="1.300" /><path d="M9.500 11.500l3 3" stroke="#333" strokeWidth="3" /><path d="M12 4h5M14.500 1.500v5M12 8.500h5" stroke="#444" /></svg>
      </IconButton>
      <IconButton aria-label="fit">
        <svg width="18" height="17"><rect x="1.500" y=".5" width="14" height="15" fill="none" stroke="#666" strokeDasharray="2 2" /><circle cx="8" cy="7.500" r="6.300" fill="#e1f1f4" stroke="#56646a" strokeWidth="1.300" /><path d="M12.500 12l4 4" stroke="#333" strokeWidth="3" /></svg>
        <Caret w={6} h={4} />
      </IconButton>
    </NavBar>
    <NavBar>
      <IconButton aria-label="display" $gap={3}>
        <svg width="17" height="17"><rect x="1" y="1" width="15" height="11.500" fill="#fff" stroke="#444" strokeWidth="1.300" /><rect x="3.500" y="3.500" width="10" height="6.500" fill="#9dbfe6" stroke="#4c75a8" /><path d="M6 13h5v2.500H4.500h8" fill="#eee" stroke="#555" /></svg>
        <Caret w={6} h={4} />
      </IconButton>
      <IconButton aria-label="grid" $gap={3}>
        <svg width="17" height="17"><rect x=".5" y=".5" width="16" height="16" fill="#f4f6fa" stroke="#444" /><path d="M1 8h15v8H1z" fill="#a9b2c4" opacity=".6" /><path d="M4.500 0v17M8.500 0v17M12.500 0v17M0 4.500h17M0 8.500h17M0 12.500h17" stroke="#666f80" /></svg>
        <Caret w={6} h={4} />
      </IconButton>
    </NavBar>
  </NavBars>
);

export default function App() {
  return (
    <Window>
      <GlobalStyle />
      <Frame>
        <TitleBar>
          <LogoSlot>
            <svg width="16" height="16"><rect width="16" height="16" fill="#cfe9f5" /><path d="M4 2l9-1v3.500l-5 .5v2h4v3H8v4.500l-4 .5z" fill="#e07a2c" /><path d="M4 2l2 1v12l-2 0z" fill="#8a3d14" /></svg>
          </LogoSlot>
          <Title>Autodesk Fusion 360</Title>
          <WindowButtons>
            <WindowButton $width={27} $first aria-label="minimize"><svg width="12" height="5"><rect x=".5" y=".5" width="11" height="4" rx="1" fill="#fff" stroke="#4d5568" /></svg></WindowButton>
            <WindowButton $width={27} aria-label="restore"><svg width="12" height="10" fill="#fff" stroke="#4d5568"><rect x=".5" y=".5" width="11" height="9" rx="1" /><rect x="3.500" y="3.500" width="5" height="3" /></svg></WindowButton>
            <WindowButton $width={42} $inset={8} aria-label="close">
              <svg width="12" height="11"><path d="M1 .5h3.500L6 2.500 7.500.5H11L8 5.500l3 5H7.500L6 8.500l-1.500 2H1l3-5z" fill="#fff" stroke="#4d5568" /></svg>
            </WindowButton>
          </WindowButtons>
        </TitleBar>
        <Client>
          <AppBar>
            <IconButton $width={44} aria-label="data panel">
              <svg width="17" height="17" fill="#4f4f4f"><path d="M0 0h5v5H0zM6 0h5v5H6zM12 0h5v5h-5zM0 6h5v5H0zM6 6h5v5H6zM12 6h5v5h-5zM0 12h5v5H0zM6 12h5v5H6zM12 12h5v5h-5z" /></svg>
            </IconButton>
            <IconButton $width={51} aria-label="file">
              <svg width="13" height="16" fill="#4f4f4f"><path d="M0 0h8v5h5v11H0zM9 0l4 4H9z" /></svg><Caret />
            </IconButton>
            <IconButton $width={40} $muted aria-label="save">
              <svg width="16" height="16" fill="#858585"><path d="M0 0h16v16H0z" /><path d="M3 1h10v6H3zM4 10h8v5H4z" fill="#dcdcdc" /><path d="M9 11h2v4H9z" /></svg>
            </IconButton>
            <IconButton $width={45} $muted aria-label="undo">
              <svg width="17" height="12" fill="#858585"><path d="M0 5l7-5v3c6 0 10 3 9 9-1-3-4-5-9-5v3z" /></svg><Caret color="#777" />
            </IconButton>
            <IconButton $muted aria-label="redo">
              <svg width="17" height="12" fill="#858585"><path d="M17 5l-7-5v3C4 3 0 6 1 12c1-3 4-5 9-5v3z" /></svg><Caret color="#777" />
            </IconButton>
            <Grow />
            <UserButton>秀敏 五味<Caret /></UserButton>
            <IconButton $gap={4} aria-label="help">
              <svg width="17" height="17"><circle cx="8.500" cy="8.500" r="8" fill="#686868" /><text x="8.500" y="13" textAnchor="middle" fontSize="13" fontWeight="bold" fill="#e4e4e4">?</text></svg>
              <Caret />
            </IconButton>
          </AppBar>
          <TabStrip>
            <DocumentTab>
              <svg width="17" height="16"><path d="M0 3l8-3 8 2-7 4z" fill="#9a9a9a" /><path d="M0 3l9 3v10l-8-5z" fill="#787878" /><path d="M9 6l7-4v8l-7 6z" fill="#444" /></svg>
              <TabName>19mmAA v2</TabName>
              <BareButton aria-label="close tab"><Cross color="#888" /></BareButton>
            </DocumentTab>
            <Grow />
            <IconButton aria-label="collapse"><svg width="14" height="8"><path d="M1.500 7l5-5 5 5" fill="none" stroke="#777" strokeWidth="2.500" /></svg></IconButton>
          </TabStrip>
          <Viewport>
            <Model />
            <LeftColumn>
              <Ribbon>
                <Workspace>
                  <Grip $height={22} /><CamIcon />
                  <Caption $gap={0}>CAM<Caret w={6} color="#fff" /></Caption>
                </Workspace>
                {ribbon.map((g) => (
                  <Group key={g.name} $width={g.width}>
                    <ToolRow>
                      {g.icons.map((Icon, i) => (
                        <Tool key={i} $active={g.active === i} aria-label={g.name}><Icon /></Tool>
                      ))}
                    </ToolRow>
                    <Caption $size={size(g.name)}>{g.name}<Caret w={6} hidden={!g.menu} /></Caption>
                  </Group>
                ))}
              </Ribbon>
              <PanelBar>
                <BareButton aria-label="collapse browser"><svg width="10" height="6"><path d="M5 0v6L0 3zM10 0v6L5 3z" fill="#222" /></svg></BareButton>
                <PanelTitle $indent={12}>ブラウザ</PanelTitle>
                <BareButton aria-label="minimize browser"><Dot /></BareButton>
                <GripSlot><Grip $height={11} /></GripSlot>
              </PanelBar>
              <Tree>
                <TreeRow $indent={17}>
                  <ArrowSlot><Disclosure open /></ArrowSlot>
                  <TreeItem $width={127}><Bulb /><Components /><TreeText $space={4}>19mmAA v2</TreeText></TreeItem>
                </TreeRow>
                <TreeRow $indent={54}>
                  <TreeItem $width={86}><Units /><TreeText $space={4}>単位: mm</TreeText></TreeItem>
                </TreeRow>
                <TreeRow $indent={35}>
                  <ArrowSlot><Disclosure /></ArrowSlot>
                  <TreeItem $width={135}><Bulb /><Body3D /><TreeText $space={4}>19mmAA v2:1</TreeText></TreeItem>
                </TreeRow>
                <TreeRow $indent={35}>
                  <ArrowSlot><Disclosure /></ArrowSlot>
                  <TreeItem $width={66}><SetupSmall /><TreeText $space={2}>操作</TreeText></TreeItem>
                </TreeRow>
              </Tree>
              <PanelBar>
                <PanelTitle $indent={22}>コメント</PanelTitle>
                <BareButton aria-label="expand comments"><Dot plus /></BareButton>
                <GripSlot><Grip $height={11} /></GripSlot>
              </PanelBar>
            </LeftColumn>
            <Navigation />
            <SetupDialog />
            <ViewCube />
          </Viewport>
        </Client>
      </Frame>
      <EdgeStrip />
      <Notes viewBox="0 0 2562 1440" fill="none" stroke="#ee1c24" strokeWidth="5">
        <path d="M2562 81.500H2449.500V195.500H2562" />
        <rect x="1203.500" y="573.500" width="274" height="208" />
        <ellipse cx="2406.500" cy="145.500" rx="25.500" ry="25" strokeWidth="3.500" />
        <ellipse cx="1172.500" cy="695.500" rx="25.500" ry="25" strokeWidth="3.500" />
        <g fill="#ee1c24" stroke="none" fontFamily="'Open Sans', 'Noto Sans', sans-serif" fontSize="48" fontWeight="600" textAnchor="middle">
          <text x="2405" y="162">1</text>
          <text x="1172" y="712">2</text>
        </g>
      </Notes>
    </Window>
  );
}
